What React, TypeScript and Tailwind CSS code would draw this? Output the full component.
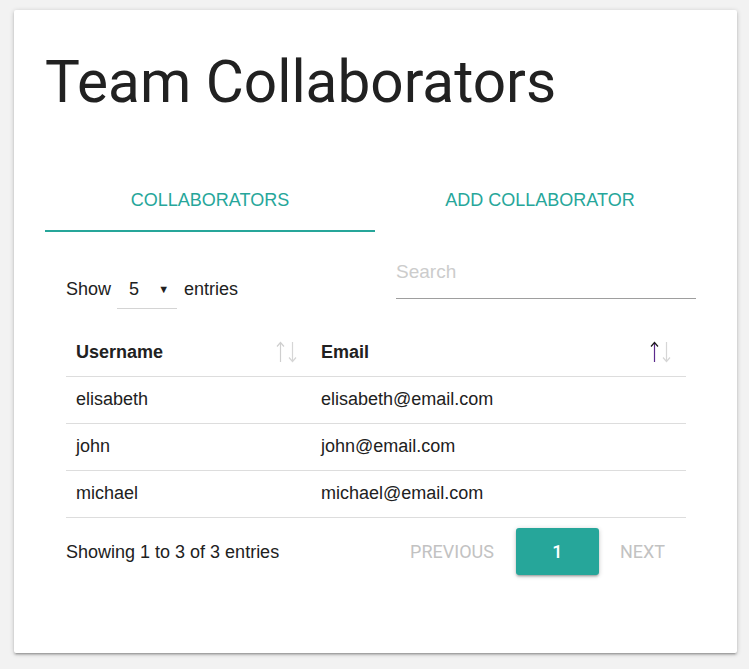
import { useState } from 'react'

type Collaborator = {
  username: string
  email: string
}

const collaborators: Collaborator[] = [
  { username: 'elisabeth', email: 'elisabeth@email.com' },
  { username: 'john', email: 'john@email.com' },
  { username: 'michael', email: 'michael@email.com' },
]

const ARIAL = "font-['Liberation_Sans',Arial,sans-serif]"
const ROBOTO = "font-['Roboto',sans-serif]"

function SortArrows({ active }: { active?: boolean }) {
  return (
    <svg width="22" height="24" viewBox="0 0 22 24" fill="none" className="shrink-0">
      <path d="M4.5 3v19" stroke={active ? '#5b2a8c' : '#cfcfcf'} strokeWidth="1.2" />
      <path
        d="M1 6.5l3.5-4 3.5 4"
        stroke={active ? '#1a1a1a' : '#cfcfcf'}
        strokeWidth="1.2"
      />
      <path d="M16.5 2v19" stroke="#d6d6d6" strokeWidth="1.2" />
      <path d="M13 17.5l3.5 4 3.5-4" stroke="#d6d6d6" strokeWidth="1.2" />
    </svg>
  )
}

export default function App() {
  const [activeTab, setActiveTab] = useState(0)
  const tabs = ['Collaborators', 'Add Collaborator']

  return (
    <div className="min-h-[669px] w-full bg-[#f2f2f2] pt-[10px] pl-[14px]">
      <div className="h-[643px] w-[723px] rounded-[2px] bg-white px-[31px] pt-[40px] shadow-[0_2px_2px_0_rgba(0,0,0,0.14),0_3px_1px_-2px_rgba(0,0,0,0.12),0_1px_5px_0_rgba(0,0,0,0.2)]">
        <h1 className={`${ROBOTO} text-[58.5px] leading-[65px] font-normal text-[#212121]`}>
          Team Collaborators
        </h1>

        <div className="mt-[69px] flex w-[660px]">
          {tabs.map((tab, index) => (
            <div
              key={tab}
              role="tab"
              onClick={() => setActiveTab(index)}
              className={`${ARIAL} h-[48px] flex-1 cursor-pointer pt-[6px] text-center text-[18px] leading-[20px] uppercase text-[#26a69a] border-b-2 ${
                activeTab === index ? 'border-[#26a69a]' : 'border-transparent'
              }`}
            >
              {tab}
            </div>
          ))}
        </div>

        <div className="ml-[21px] w-[630px]">
          <div className="mt-[18px] flex h-[49px] items-start justify-between">
            <div className={`${ARIAL} mt-[20px] flex items-center text-[18px] text-[#212121]`}>
              <span>Show</span>
              <div className="ml-[6px] flex h-[39px] w-[60px] items-center justify-between border-b border-[#d4d4d4] pl-[12px] pr-[8px]">
                <span>5</span>
                <span className="text-[11px]">▼</span>
              </div>
              <span className="ml-[7px]">entries</span>
            </div>
            <div className="flex h-[49px] w-[300px] items-center border-b border-[#9e9e9e] pb-[4px]">
              <input
                placeholder="Search"
                className={`${ARIAL} w-full bg-transparent text-[19px] text-[#212121] outline-none placeholder:text-[#cccccc]`}
              />
            </div>
          </div>

          <table className={`${ARIAL} mt-[30px] w-[620px] table-fixed border-collapse text-[18px] text-[#212121]`}>
            <thead>
              <tr className="border-b border-[#dddddd]">
                <th className="h-[47px] w-[245px] pl-[10px] pr-[13px] text-left font-bold">
                  <div className="flex items-center justify-between">
                    <span>Username</span>
                    <SortArrows />
                  </div>
                </th>
                <th className="h-[47px] pl-[10px] pr-[14px] text-left font-bold">
                  <div className="flex items-center justify-between">
                    <span>Email</span>
                    <SortArrows active />
                  </div>
                </th>
              </tr>
            </thead>
            <tbody>
              {collaborators.map((collaborator) => (
                <tr key={collaborator.username} className="border-b border-[#dddddd]">
                  <td className="h-[47px] pl-[10px]">{collaborator.username}</td>
                  <td className="h-[47px] pl-[10px]">{collaborator.email}</td>
                </tr>
              ))}
            </tbody>
          </table>

          <div className="mt-[10px] flex w-[620px] items-center justify-between">
            <span className={`${ARIAL} pt-[3px] text-[18px] text-[#212121]`}>
              Showing 1 to 3 of 3 entries
            </span>
            <div className={`${ROBOTO} flex items-center text-[18px] uppercase`}>
              <span className="px-[22px] text-[#c2c2c2]">Previous</span>
              <button
                type="button"
                className="h-[47px] w-[83px] rounded-[3px] bg-[#26a69a] font-medium text-white shadow-[0_2px_2px_0_rgba(0,0,0,0.14),0_3px_1px_-2px_rgba(0,0,0,0.12),0_1px_5px_0_rgba(0,0,0,0.2)]"
              >
                1
              </button>
              <span className="px-[21px] text-[#c2c2c2]">Next</span>
            </div>
          </div>
        </div>
      </div>
    </div>
  )
}
